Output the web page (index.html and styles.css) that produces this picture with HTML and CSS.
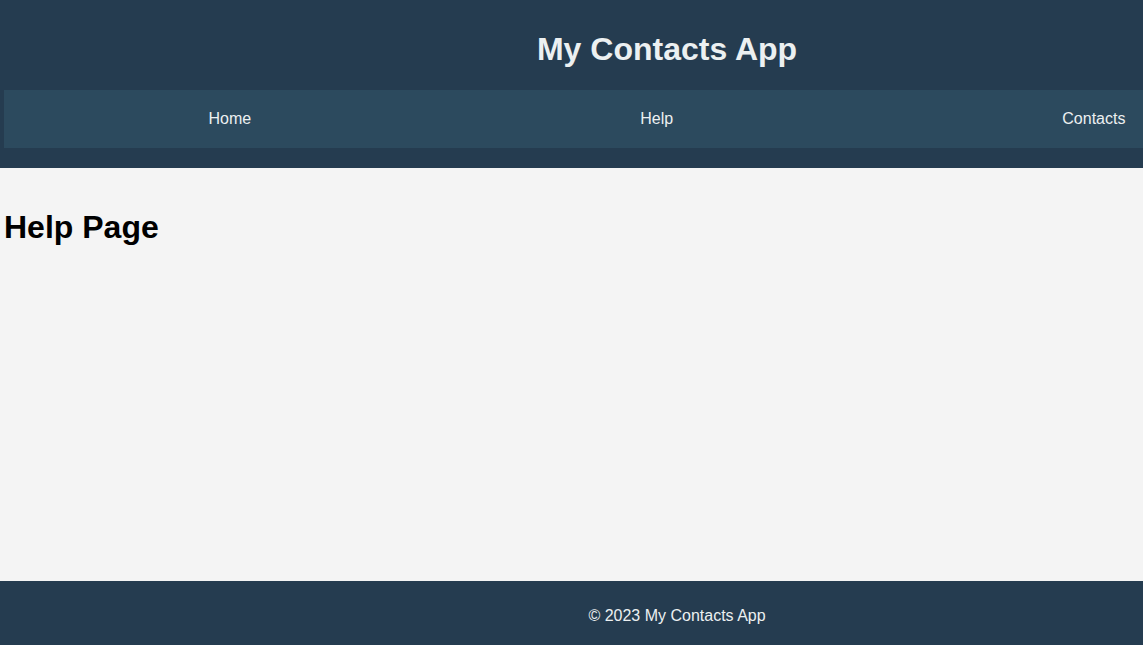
FILE: index.html
```html
<!DOCTYPE html>
<html lang="en">
<head>
<meta charset="utf-8">
<title>My Contacts App</title>
<link rel="stylesheet" href="styles.css">
</head>
<body>
<header class="site-header">
  <div class="header-inner">
    <h1 class="site-title">My Contacts App</h1>
    <nav class="site-nav">
      <ul class="nav-list">
        <li><a class="nav-link" href="#">Home</a></li>
        <li><a class="nav-link" href="#">Help</a></li>
        <li><a class="nav-link" href="#">Contacts</a></li>
      </ul>
    </nav>
  </div>
</header>
<main class="content">
  <h1 class="page-title">Help Page</h1>
</main>
<footer class="site-footer">
  <div class="footer-inner">© 2023 My Contacts App</div>
</footer>
</body>
</html>
```

FILE: styles.css
```css
html, body {
  margin: 0;
  padding: 0;
}
body {
  font-family: "Liberation Sans", Arial, sans-serif;
  font-size: 16px;
  background: #f4f4f4;
  color: #000;
  min-height: 100vh;
  display: flex;
  flex-direction: column;
  overflow: hidden;
}
.site-header {
  background: #253c50;
  color: #ecf0f1;
  overflow: hidden;
}
.header-inner {
  width: 1326px;
  padding: 10px 4px 20px;
}
.site-title {
  margin: 21.44px 0;
  font-size: 32px;
  text-align: center;
}
.site-nav {
  background: #2c4a5e;
  padding: 10px;
}
.nav-list {
  list-style: none;
  margin: 0;
  padding: 0;
  display: flex;
  justify-content: space-around;
}
.nav-link {
  display: block;
  padding: 10px 0;
  color: #ecf0f1;
  text-decoration: none;
}
.content {
  flex: 1;
  padding: 20px 4px;
}
.page-title {
  margin: 21.44px 0;
  font-size: 32px;
}
.site-footer {
  background: #253c50;
  color: #ecf0f1;
  overflow: hidden;
}
.footer-inner {
  width: 1354px;
  height: 61px;
  padding-top: 3px;
  line-height: 64px;
  text-align: center;
}
```
